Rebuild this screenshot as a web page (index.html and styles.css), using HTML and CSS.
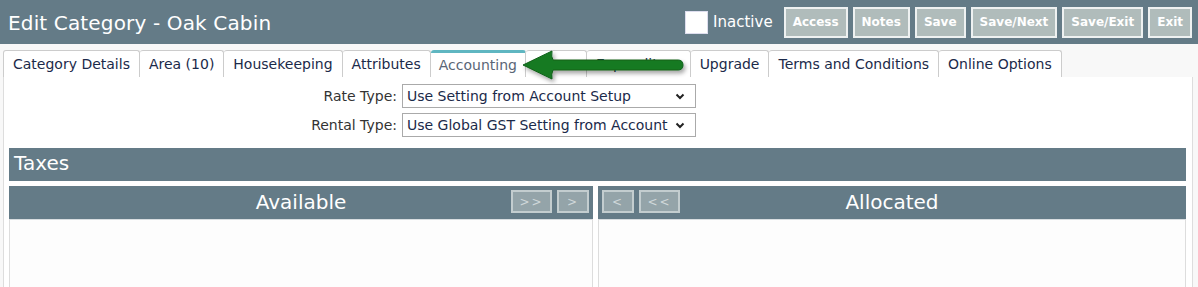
FILE: index.html
```html
<!DOCTYPE html>
<html lang="en">
<head>
    <meta charset="UTF-8">
    <meta name="viewport" content="width=device-width, initial-scale=1.0">
    <title>Edit Category - Oak Cabin</title>
    <link rel="stylesheet" href="styles.css">
</head>
<body>
    <header class="topbar">
        <h1 class="title">Edit Category - Oak Cabin</h1>
        <label class="inactive">
            <span class="check"></span>
            Inactive
        </label>
        <div class="actions">
            <button class="action-btn">Access</button>
            <button class="action-btn">Notes</button>
            <button class="action-btn">Save</button>
            <button class="action-btn">Save/Next</button>
            <button class="action-btn">Save/Exit</button>
            <button class="action-btn">Exit</button>
        </div>
    </header>

    <main class="page">
        <nav class="tabs">
            <a class="tab">Category Details</a>
            <a class="tab">Area (10)</a>
            <a class="tab">Housekeeping</a>
            <a class="tab">Attributes</a>
            <a class="tab active">Accounting</a>
            <a class="tab tab-fees">Fees</a>
            <a class="tab">Expenditure</a>
            <a class="tab">Upgrade</a>
            <a class="tab">Terms and Conditions</a>
            <a class="tab">Online Options</a>
        </nav>

        <!-- callout arrow pointing at the Accounting tab -->
        <svg class="callout" width="180" height="50" viewBox="0 0 180 50">
            <defs>
                <filter id="shadow" x="-10%" y="-30%" width="130%" height="180%">
                    <feDropShadow dx="2" dy="3" stdDeviation="2" flood-color="#000" flood-opacity="0.35"/>
                </filter>
            </defs>
            <path d="M5 22 L34 8 Q33 14 35 17 L160 17 Q165 17 165 22 Q165 27 160 27 L35 27 Q33 31 34 36 Z"
                  fill="#177a23" stroke="#106019" stroke-width="1" filter="url(#shadow)"/>
        </svg>

        <section class="panel">
            <div class="form-row">
                <label class="form-label" for="rateType">Rate Type:</label>
                <div class="select-wrap">
                    <select id="rateType" class="form-select">
                        <option>Use Setting from Account Setup</option>
                    </select>
                    <svg class="chevron" width="10" height="7" viewBox="0 0 10 7">
                        <path d="M1.5 1.5 L5 5 L8.5 1.5" fill="none" stroke="#222" stroke-width="2"/>
                    </svg>
                </div>
            </div>
            <div class="form-row">
                <label class="form-label" for="rentalType">Rental Type:</label>
                <div class="select-wrap">
                    <select id="rentalType" class="form-select">
                        <option>Use Global GST Setting from Account Setup</option>
                    </select>
                    <svg class="chevron" width="10" height="7" viewBox="0 0 10 7">
                        <path d="M1.5 1.5 L5 5 L8.5 1.5" fill="none" stroke="#222" stroke-width="2"/>
                    </svg>
                </div>
            </div>

            <h2 class="section-bar">Taxes</h2>

            <div class="lists">
                <div class="list">
                    <div class="list-head">
                        <span class="list-title">Available</span>
                        <div class="list-btns right">
                            <button class="move-btn wide">&gt;&gt;</button>
                            <button class="move-btn">&gt;</button>
                        </div>
                    </div>
                    <div class="list-body"></div>
                </div>
                <div class="list">
                    <div class="list-head">
                        <div class="list-btns left">
                            <button class="move-btn">&lt;</button>
                            <button class="move-btn wide">&lt;&lt;</button>
                        </div>
                        <span class="list-title">Allocated</span>
                    </div>
                    <div class="list-body"></div>
                </div>
            </div>
        </section>
    </main>
</body>
</html>
```

FILE: styles.css
```css
body {
    margin: 0;
    padding: 0;
    font-family: "DejaVu Sans", Verdana, sans-serif;
    background-color: #f8f8f8;
    color: #1b2a4a;
    overflow: hidden;
}

.topbar {
    display: flex;
    align-items: center;
    height: 44px;
    padding: 0 6px 0 8px;
    background-color: #647b87;
    color: #fff;
}

.title {
    margin: 0;
    font-size: 20px;
    font-weight: normal;
    letter-spacing: 0.15px;
    flex: 1;
    padding-top: 2px;
}

.inactive {
    display: flex;
    align-items: center;
    gap: 5px;
    font-size: 15px;
    margin-right: 11px;
}

.check {
    width: 21px;
    height: 21px;
    background: #fff;
    border: 1px solid #dde;
}

.actions {
    display: flex;
    gap: 5px;
}

.action-btn {
    height: 31px;
    padding: 0 7px;
    border: 2px solid #eef1f1;
    background-color: #b0bcbb;
    color: #fff;
    font-family: "DejaVu Sans", Verdana, sans-serif;
    font-size: 12px;
    font-weight: bold;
}

.page {
    position: relative;
    padding: 6px 5px 0 3px;
}

.tabs {
    display: flex;
}

.tab {
    height: 26px;
    padding: 0 9px;
    display: flex;
    align-items: center;
    font-size: 14px;
    color: #1b2a4a;
    background: #fff;
    border: 1px solid #ccc;
    border-bottom: none;
    border-left: none;
    border-radius: 3px 3px 0 0;
}

.tab:first-child {
    border-left: 1px solid #ccc;
}

.tab.active {
    color: #5a6676;
    border-top: 3px solid #5fb6c1;
    height: 24px;
    padding: 0 8px;
}

.tab-fees {
    color: #fff;
    width: 42px;
}

.callout {
    position: absolute;
    left: 518px;
    top: -1px;
}

.panel {
    background: #fff;
    border-left: 1px solid #ddd;
    border-right: 1px solid #ddd;
    height: 220px;
    padding: 7px 6px 0 5px;
}

.form-row {
    display: flex;
    align-items: center;
    margin-bottom: 5px;
}

.form-label {
    width: 388px;
    text-align: right;
    padding-right: 5px;
    font-size: 14px;
    color: #333;
}

.select-wrap {
    position: relative;
}

.form-select {
    appearance: none;
    display: block;
    width: 294px;
    height: 24px;
    font-family: "DejaVu Sans", Verdana, sans-serif;
    font-size: 14px;
    color: #1b2a4a;
    background: #fff;
    border: 1px solid #aaa;
    border-radius: 0;
    padding: 0 24px 0 4px;
}

.chevron {
    position: absolute;
    right: 11px;
    top: 9px;
}

.section-bar {
    margin: 11px 0 5px 0;
    height: 33px;
    line-height: 31px;
    padding-left: 5px;
    background-color: #647b87;
    color: #fff;
    font-size: 20px;
    font-weight: normal;
}

.lists {
    display: flex;
    gap: 5px;
}

.list {
    flex: 1;
    display: flex;
    flex-direction: column;
}

.list:first-child {
    flex: 0 0 584px;
}

.list-head {
    position: relative;
    height: 33px;
    background-color: #647b87;
    display: flex;
    align-items: center;
    justify-content: center;
    padding-bottom: 2px;
    box-sizing: border-box;
}

.list-title {
    color: #fff;
    font-size: 20px;
}

.list-btns {
    position: absolute;
    top: 4px;
    display: flex;
    gap: 5px;
}

.list-btns.right {
    right: 4px;
}

.list-btns.left {
    left: 4px;
}

.move-btn {
    width: 32px;
    height: 23px;
    padding: 0;
    background: #94a4a9;
    border: 2px solid #c3cdcf;
    color: #d0d8da;
    font-family: "DejaVu Sans", Verdana, sans-serif;
    font-size: 12px;
    letter-spacing: 2px;
}

.move-btn.wide {
    width: 41px;
}

.list-body {
    height: 80px;
    background: #fdfdfd;
    border: 1px solid #ddd;
    border-top: 1px solid #d8dde0;
}
```
